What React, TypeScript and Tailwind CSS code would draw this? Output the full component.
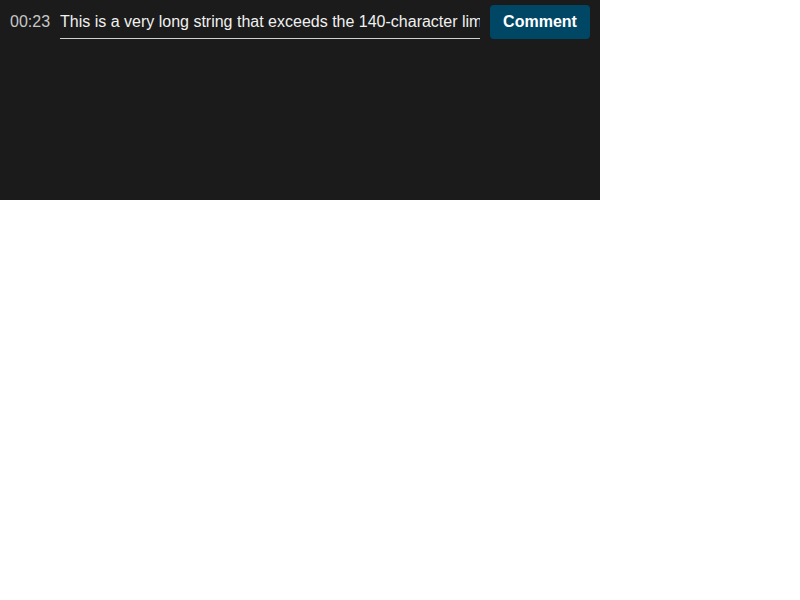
import React, { useState } from 'react';

const App: React.FC = () => {
  const [text, setText] = useState(
    'This is a very long string that exceeds the 140-character limit and should be truncated or rejected by the comment input field validation logic.'
  );

  return (
    <div className="w-[600px] h-[200px] bg-[#1b1b1b] font-['Liberation_Sans',Arial,sans-serif]">
      <div className="flex items-center gap-[10px] px-[10px] pt-[5px]">
        {/* timestamp */}
        <span className="text-[16px] text-[#c8c8c8] w-[40px] shrink-0">00:23</span>
        <input
          value={text}
          onChange={(e) => setText(e.target.value)}
          className="w-[420px] h-[34px] bg-transparent text-[16px] text-[#f0f0f0] border-b border-[#d0d0d0] outline-none p-0"
        />
        <button className="w-[100px] h-[34px] rounded-[4px] bg-[#004766] text-white text-[16px] font-bold">
          Comment
        </button>
      </div>
    </div>
  );
};

export default App;
